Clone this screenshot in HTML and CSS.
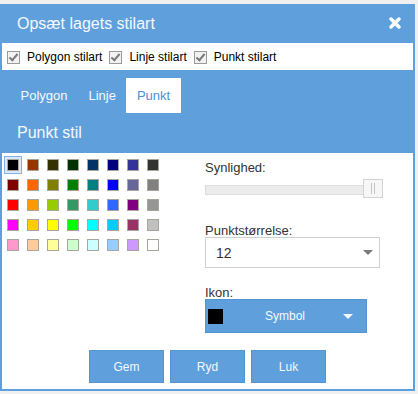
FILE: index.html
```html
<!DOCTYPE html>
<html lang="da">
<head>
  <meta charset="UTF-8" />
  <title>Opsæt lagets stilart</title>
  <link rel="stylesheet" href="styles.css">
</head>
<body>

  <div class="dialog">
    <div class="dialog-header">
      <span class="dialog-title">Opsæt lagets stilart</span>
      <span class="close-btn">
        <svg width="12" height="12" viewBox="0 0 12 12"><path d="M2 2 L10 10 M10 2 L2 10" stroke="#fff" stroke-width="3.4" stroke-linecap="round"/></svg>
      </span>
    </div>

    <div class="check-bar">
      <label class="check-item"><span class="check-box"></span>Polygon stilart</label>
      <label class="check-item"><span class="check-box"></span>Linje stilart</label>
      <label class="check-item"><span class="check-box"></span>Punkt stilart</label>
    </div>

    <ul class="tabs">
      <li class="tab">Polygon</li>
      <li class="tab">Linje</li>
      <li class="tab active">Punkt</li>
    </ul>

    <h2 class="section-title">Punkt stil</h2>

    <div class="panel">
      <div class="panel-top">
        <div class="palette" id="palette">
          <!-- farver indsættes her -->
        </div>

        <div class="settings">
          <div class="field-label">Synlighed:</div>
          <div class="slider">
            <div class="slider-track"></div>
            <div class="slider-handle"><span></span><span></span></div>
          </div>

          <div class="field-label label-size">Punktstørrelse:</div>
          <div class="select-box">
            <span>12</span>
            <span class="arrow-gray"></span>
          </div>

          <div class="field-label label-icon">Ikon:</div>
          <div class="icon-btn">
            <span class="icon-preview"></span>
            <span class="icon-text">Symbol</span>
            <span class="arrow-white"></span>
          </div>
        </div>
      </div>

      <div class="actions">
        <button class="action-btn">Gem</button>
        <button class="action-btn">Ryd</button>
        <button class="action-btn">Luk</button>
      </div>
    </div>
  </div>

  <script>
    // Standard farvepalet (8 x 5)
    const farver = [
      '#000000', '#993300', '#333300', '#003300', '#003366', '#000080', '#333399', '#333333',
      '#800000', '#FF6600', '#808000', '#008000', '#008080', '#0000FF', '#666699', '#808080',
      '#FF0000', '#FF9900', '#99CC00', '#339966', '#33CCCC', '#3366FF', '#800080', '#969696',
      '#FF00FF', '#FFCC00', '#FFFF00', '#00FF00', '#00FFFF', '#00CCFF', '#993366', '#C0C0C0',
      '#FF99CC', '#FFCC99', '#FFFF99', '#CCFFCC', '#CCFFFF', '#99CCFF', '#CC99FF', '#FFFFFF'
    ];

    const palette = document.getElementById('palette');
    farver.forEach((farve, index) => {
      const celle = document.createElement('span');
      celle.className = index === 0 ? 'swatch-cell selected' : 'swatch-cell';
      const swatch = document.createElement('span');
      swatch.className = 'swatch';
      swatch.style.background = farve;
      celle.appendChild(swatch);
      palette.appendChild(celle);
    });
  </script>
</body>
</html>
```

FILE: styles.css
```css
body {
  font-family: "Liberation Sans", Arial, sans-serif;
  margin: 0;
  padding: 0;
  background: #f0f0f0;
}
.dialog {
  width: 411px;
  margin-top: 4px;
  border: 2px solid #5fa0dc;
  border-top: none;
  background: #5fa0dc;
}
.dialog-header {
  height: 39px;
  display: flex;
  align-items: center;
  justify-content: space-between;
  margin: 0 -2px;
  padding: 0 14px 0 17px;
}
.dialog-title {
  color: #f4f8fc;
  font-size: 16px;
  line-height: 39px;
}
.close-btn {
  display: flex;
  margin-top: -1px;
}
.check-bar {
  height: 27px;
  background: white;
  display: flex;
  align-items: center;
  padding-left: 5px;
  padding-top: 1px;
  box-sizing: border-box;
  font-size: 12px;
  color: #000;
}
.check-item {
  display: flex;
  align-items: center;
  margin-right: 7px;
}
.check-box {
  width: 11px;
  height: 11px;
  border: 1px solid #9a9a9a;
  background: #f2f2f2;
  margin-right: 7px;
  position: relative;
}
.check-box::after {
  content: "";
  position: absolute;
  left: 3px;
  top: 0px;
  width: 3px;
  height: 7px;
  border: solid #7a7a7a;
  border-width: 0 2px 2px 0;
  transform: rotate(40deg);
}
.tabs {
  list-style: none;
  margin: 0;
  padding: 8px 0 0 8px;
  display: flex;
}
.tab {
  height: 35px;
  line-height: 35px;
  padding: 0 10.5px;
  font-size: 13px;
  color: #f4f8fc;
}
.tab.active {
  background: white;
  color: #4e91d4;
}
.section-title {
  margin: 0;
  height: 40px;
  line-height: 40px;
  padding-left: 15px;
  font-size: 16px;
  font-weight: normal;
  color: #f4f8fc;
}
.panel {
  background: white;
  padding: 3px 0 6px 2px;
}
.panel-top {
  display: flex;
}
.palette {
  width: 201px;
  display: grid;
  grid-template-columns: repeat(8, 18px);
  grid-auto-rows: 18px;
  gap: 2px;
  align-content: start;
}
.swatch-cell {
  border: 1px solid transparent;
  padding: 2px;
  width: 12px;
  height: 12px;
}
.swatch-cell.selected {
  border-color: #7fb2ea;
  background: #dde9f8;
}
.swatch {
  display: block;
  width: 10px;
  height: 10px;
  border: 1px solid #a9a59c;
}
.settings {
  width: 176px;
  padding-top: 5px;
}
.field-label {
  font-size: 13px;
  line-height: 13px;
  color: #333;
}
.slider {
  position: relative;
  height: 19px;
  margin-top: 5px;
}
.slider-track {
  position: absolute;
  left: 0;
  right: 6px;
  top: 6px;
  height: 8px;
  background: #ececec;
  border: 1px solid #dcdcdc;
}
.slider-handle {
  position: absolute;
  right: -2px;
  top: 0;
  width: 18px;
  height: 17px;
  background: #f7f7f7;
  border: 1px solid #d3d3d3;
  display: flex;
  justify-content: center;
  align-items: center;
  gap: 2px;
}
.slider-handle span {
  width: 1px;
  height: 11px;
  background: #c4c4c4;
}
.label-size {
  margin-top: 26px;
}
.select-box {
  height: 29px;
  border: 1px solid #cfcfcf;
  display: flex;
  align-items: center;
  justify-content: space-between;
  padding: 0 6px 0 10px;
  margin-right: 1px;
  font-size: 14px;
  color: #333;
}
.arrow-gray {
  width: 0;
  height: 0;
  border-left: 5px solid transparent;
  border-right: 5px solid transparent;
  border-top: 5px solid #7a7a7a;
}
.label-icon {
  margin-top: 18px;
}
.icon-btn {
  width: 158px;
  height: 32px;
  background: #5fa0dc;
  border: 1px solid #5394d2;
  display: flex;
  align-items: center;
  padding-left: 2px;
  color: #f4f8fc;
  font-size: 12px;
}
.icon-preview {
  width: 15px;
  height: 15px;
  background: #000;
}
.icon-text {
  flex: 1;
  text-align: center;
  margin-left: 8px;
}
.arrow-white {
  width: 0;
  height: 0;
  border-left: 5px solid transparent;
  border-right: 5px solid transparent;
  border-top: 5px solid #f4f8fc;
  margin-right: 13px;
  margin-left: 4px;
}
.actions {
  display: flex;
  justify-content: center;
  gap: 6px;
  margin-top: 17px;
  margin-left: -2px;
}
.action-btn {
  width: 75px;
  height: 33px;
  background: #5fa0dc;
  border: 1px solid #5394d2;
  color: #f4f8fc;
  font-family: "Liberation Sans", Arial, sans-serif;
  font-size: 12px;
  padding: 0;
}
```
